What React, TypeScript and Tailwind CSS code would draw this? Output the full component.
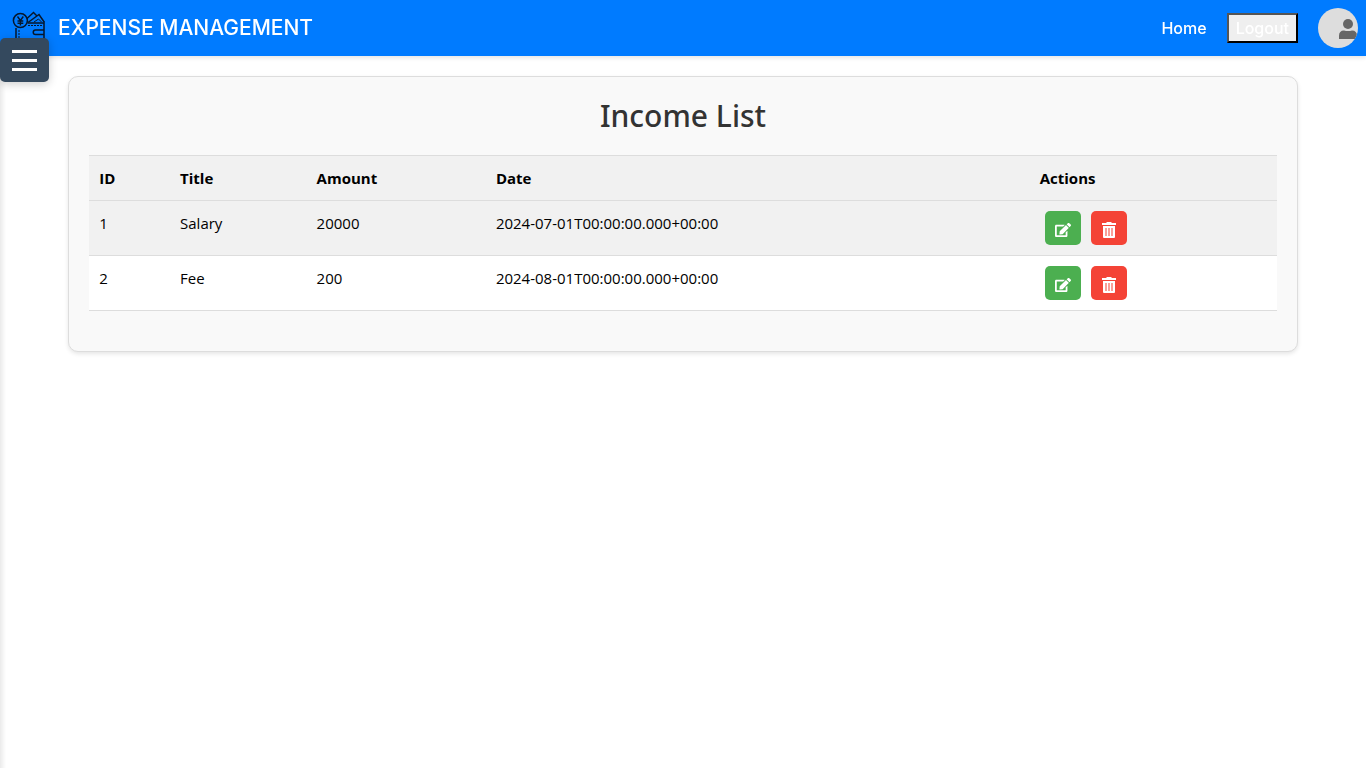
import { FaEdit } from "react-icons/fa";

type Income = { id: number; title: string; amount: number; date: string };

const incomes: Income[] = [
  { id: 1, title: "Salary", amount: 20000, date: "2024-07-01T00:00:00.000+00:00" },
  { id: 2, title: "Fee", amount: 200, date: "2024-08-01T00:00:00.000+00:00" },
];

function WalletLogo() {
  return (
    <svg className="size-9" viewBox="0 0 36 36" fill="none" stroke="#06172c" strokeWidth="1.5" aria-hidden="true">
      <circle cx="8.4" cy="10.6" r="7" />
      <path d="M5.5 6.500l2.900 4 2.900-4M8.400 10.500v5M5.500 11h5.800M5.500 13.200h5.800" strokeWidth="1.4" />
      <path d="M15 8.500L21.500 2.500 24.500 5.500M16 12.500L27 4.500 32.500 12.500" />
      <path d="M22 12l4.500-3 3 3" strokeWidth="1" />
      <path d="M4 18V34h28V13H15.500M32 20h-8.500a2.200 2.200 0 0 0 0 4.500H32" />
      <path d="M16 15.500h14M7 20v12" strokeDasharray="2 1" strokeWidth="1" />
    </svg>
  );
}

function TrashIcon() {
  return (
    <svg className="size-4" viewBox="0 0 16 16" fill="none" aria-hidden="true">
      <path d="M1 1h4.500V0h5v1H15v2H1z" fill="#fff" />
      <path d="M2 4h12v11q0 1-1 1H3q-1 0-1-1z" fill="#fff" />
      <path d="M5 6v8M8 6v8M11 6v8" stroke="#fa9f98" strokeWidth="2" />
      <path d="M6.500 6v8M9.500 6v8" stroke="#fff" strokeWidth="1" />
    </svg>
  );
}

function Avatar() {
  return (
    <svg className="size-10" viewBox="0 0 40 40" role="img" aria-label="Profile">
      <clipPath id="avatar-clip">
        <circle cx="20" cy="20" r="20" />
      </clipPath>
      <circle cx="20" cy="20" r="20" fill="#ddd" />
      <g fill="#666" clipPath="url(#avatar-clip)">
        <circle cx="30" cy="16" r="5" />
        <path d="M21 31v-3q0-5.500 5-5.500 4 1.200 8 0 5 0 5 5.500v3z" />
      </g>
    </svg>
  );
}

export default function App() {
  return (
    <div className="min-h-screen bg-white font-['Open_Sans','Noto_Sans',sans-serif] text-black">
      <div aria-hidden="true" className="fixed inset-y-0 left-0 w-1.5 bg-linear-to-r from-black/8 to-transparent" />
      <header className="relative flex h-14 items-center justify-between bg-[#007bff] pr-2 pl-3 font-['Inter',sans-serif] text-white shadow-[0_2px_4px_rgba(0,0,0,0.1)]">
        <a href="#" className="flex items-center gap-2.5">
          <WalletLogo />
          <span className="text-[21px] font-medium">EXPENSE MANAGEMENT</span>
        </a>
        <nav className="flex items-center gap-5">
          <a href="#" className="text-base font-medium">Home</a>
          <button className="border-2 border-t-[#555] border-r-black border-b-black border-l-[#555] bg-[#efefef] px-[7px] py-px text-base font-medium">
            Logout
          </button>
          <Avatar />
        </nav>
        <button
          aria-label="Open menu"
          className="absolute top-[38px] left-0 flex h-11 w-[49px] flex-col items-center justify-center gap-1.5 rounded-[5px] bg-[#34495e] shadow-[0_2px_10px_rgba(0,0,0,0.2)]"
        >
          <span className="h-[3px] w-[25px] bg-white" />
          <span className="h-[3px] w-[25px] bg-white" />
          <span className="h-[3px] w-[25px] bg-white" />
        </button>
      </header>
      <main className="mx-[5%] mt-5 rounded-[10px] border border-[#ddd] bg-[#f9f9f9] px-5 pt-5 pb-10 shadow-[0_2px_4px_rgba(0,0,0,0.1)]">
        <h1 className="mb-5 text-center font-['Noto_Sans',sans-serif] text-[30px] leading-[38px] font-medium text-[#333]">Income List</h1>
        <table className="w-full table-fixed border-collapse text-left text-[15px] leading-6">
          <colgroup>
            <col className="w-[6.8%]" />
            <col className="w-[11.5%]" />
            <col className="w-[15.1%]" />
            <col className="w-[45.8%]" />
            <col />
          </colgroup>
          <thead>
            <tr className="border-y border-[#ddd] bg-[#f1f1f1]">
              <th className="p-2.5">ID</th>
              <th className="p-2.5">Title</th>
              <th className="p-2.5">Amount</th>
              <th className="p-2.5">Date</th>
              <th className="p-2.5">Actions</th>
            </tr>
          </thead>
          <tbody>
            {incomes.map((income) => (
              <tr key={income.id} className="border-b border-[#ddd] bg-white align-top odd:bg-[#f1f1f1]">
                <td className="p-2.5">{income.id}</td>
                <td className="p-2.5">{income.title}</td>
                <td className="p-2.5">{income.amount}</td>
                <td className="p-2.5">{income.date}</td>
                <td className="p-2.5">
                  <div className="flex gap-2.5 px-[5px]">
                    <button aria-label={`Edit ${income.title}`} className="flex h-[34px] w-9 items-center justify-center rounded-[5px] bg-[#4caf50] pt-1 text-white">
                      <FaEdit className="size-4" />
                    </button>
                    <button aria-label={`Delete ${income.title}`} className="flex h-[34px] w-9 items-center justify-center rounded-[5px] bg-[#f44336] pt-1 text-white">
                      <TrashIcon />
                    </button>
                  </div>
                </td>
              </tr>
            ))}
          </tbody>
        </table>
      </main>
    </div>
  );
}
